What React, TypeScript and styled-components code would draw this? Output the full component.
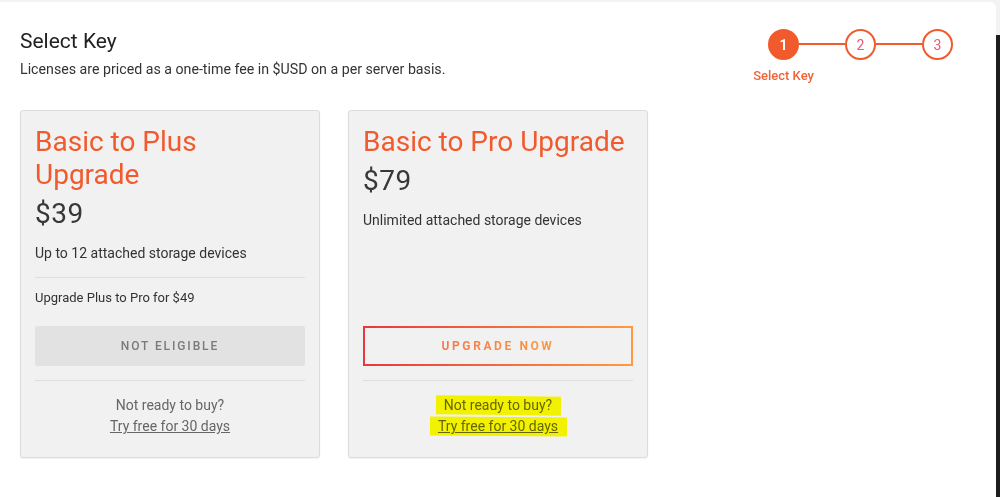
import React from 'react';
import styled, { createGlobalStyle, css } from 'styled-components';

const GlobalStyle = createGlobalStyle`
  html, body {
    margin: 0;
    padding: 0;
    background: #f3f3f3;
    font-family: Roboto, 'Liberation Sans', sans-serif;
    -webkit-font-smoothing: antialiased;
  }
`;

// Page frame
const Page = styled.div`
  display: flex;
  height: 497px;
  overflow: hidden;
`;

const Panel = styled.main`
  flex: 1;
  margin-top: 2px;
  background: #fff;
  border-top-right-radius: 6px;
  padding: 26px 43px 0 20px;
`;

const EdgeStrip = styled.div`
  width: 4px;
  display: flex;
  flex-direction: column;
  &::after {
    content: '';
    margin-top: 35px;
    flex: 1;
    background: #1d1d1d;
  }
`;

// Header
const Header = styled.header`
  display: flex;
  justify-content: space-between;
  align-items: flex-start;
`;

const Title = styled.h1`
  margin: 0;
  font-size: 21px;
  line-height: 26px;
  font-weight: 400;
  color: #222;
`;

const Lead = styled.p`
  margin: 5px 0 0;
  font-size: 14.2px;
  line-height: 20px;
  color: #333;
`;

// Stepper
const Stepper = styled.ol`
  display: flex;
  align-items: flex-start;
  list-style: none;
  margin: 1px 0 0;
  padding: 0;
`;

const Step = styled.li`
  display: flex;
  flex-direction: column;
  align-items: center;
  width: 31px;
`;

const Circle = styled.span<{ $active?: boolean }>`
  box-sizing: border-box;
  width: 31px;
  height: 31px;
  border-radius: 50%;
  display: flex;
  align-items: center;
  justify-content: center;
  font-size: 14px;
  border: 2px solid #f15a2c;
  ${({ $active }) =>
    $active
      ? css`
          background: #f15a2c;
          color: #fff;
          font-weight: 700;
        `
      : css`
          background: #fff;
          color: #f2557a;
        `}
`;

const StepLabel = styled.span`
  white-space: nowrap;
  margin-top: 8px;
  font-size: 13px;
  line-height: 15px;
  font-weight: 500;
  color: #f1643a;
`;

const Connector = styled.span`
  width: 46px;
  height: 2px;
  margin-top: 14px;
  background: #f15a2c;
`;

// Cards
const Cards = styled.section`
  display: flex;
  gap: 28px;
  margin-top: 27px;
`;

const Card = styled.article`
  box-sizing: border-box;
  width: 300px;
  display: flex;
  flex-direction: column;
  padding: 14px 14px 20px;
  background: #f1f1f1;
  border: 1px solid #dcdcdc;
  border-radius: 3px;
  box-shadow: 0 1px 2px rgba(0, 0, 0, 0.06);
`;

const CardTitle = styled.h2`
  margin: 0;
  font-size: 28px;
  line-height: 33px;
  font-weight: 400;
  color: #f15a2c;
`;

const Price = styled.div`
  margin-top: 6px;
  font-size: 28px;
  line-height: 33px;
  font-weight: 400;
  color: #383838;
  letter-spacing: 0.5px;
`;

const Desc = styled.p`
  margin: 13px 0 0;
  font-size: 14px;
  line-height: 20px;
  color: #333;
`;

const Divider = styled.hr<{ $gap: number }>`
  margin: ${({ $gap }) => $gap}px 0 0;
  border: 0;
  border-top: 1px solid #dedede;
`;

const Note = styled.p`
  margin: 11px 0 0;
  font-size: 13px;
  line-height: 18px;
  color: #333;
`;

const Footer = styled.div`
  margin-top: auto;
  padding-top: 19px;
  display: flex;
  flex-direction: column;
`;

const ActionButton = styled.button<{ $primary?: boolean }>`
  box-sizing: border-box;
  height: 40px;
  width: 100%;
  font-family: inherit;
  font-size: 12px;
  text-transform: uppercase;
  cursor: pointer;
  ${({ $primary }) =>
    $primary
      ? css`
          background: transparent;
          border: 2px solid;
          border-image: linear-gradient(90deg, #e8383f, #ff9a3e) 1;
          font-weight: 700;
          letter-spacing: 2.6px;
          & > span {
            background: linear-gradient(90deg, #f7774a, #fb9a3e);
            -webkit-background-clip: text;
            background-clip: text;
            color: transparent;
          }
        `
      : css`
          background: #e2e2e2;
          border: 0;
          border-radius: 2px;
          color: #7a7a7a;
          letter-spacing: 1.9px;
          font-weight: 500;
        `}
`;

const Trial = styled.div`
  margin-top: 14px;
  text-align: center;
  font-size: 14px;
  line-height: 21px;
  color: #666;
`;

const TrialLink = styled.a`
  color: #666;
  text-decoration: underline;
`;

const Marker = styled.span<{ $tilt: number }>`
  position: relative;
  &::before {
    content: '';
    position: absolute;
    left: -8px;
    right: -9px;
    top: -1px;
    bottom: -2px;
    background: #ffff00;
    mix-blend-mode: multiply;
    transform: rotate(${({ $tilt }) => $tilt}deg);
  }
`;

interface PlanProps {
  title: React.ReactNode;
  price: string;
  description: string;
  note?: string;
  eligible: boolean;
  highlight?: boolean;
}

const Plan: React.FC<PlanProps> = ({ title, price, description, note, eligible, highlight }) => {
  const line1 = 'Not ready to buy?';
  const line2 = <TrialLink href="#">Try free for 30 days</TrialLink>;
  return (
    <Card>
      <CardTitle>{title}</CardTitle>
      <Price>{price}</Price>
      <Desc>{description}</Desc>
      {note && (
        <>
          <Divider $gap={14} />
          <Note>{note}</Note>
        </>
      )}
      <Footer>
        <ActionButton $primary={eligible}>
          <span>{eligible ? 'Upgrade now' : 'Not eligible'}</span>
        </ActionButton>
        <Divider $gap={14} />
        <Trial>
          {highlight ? (
            <>
              <Marker $tilt={0.6}>{line1}</Marker>
              <br />
              <Marker $tilt={0.5}>{line2}</Marker>
            </>
          ) : (
            <>
              {line1}
              <br />
              {line2}
            </>
          )}
        </Trial>
      </Footer>
    </Card>
  );
};

const App: React.FC = () => (
  <>
    <GlobalStyle />
    <Page>
      <Panel>
        <Header>
          <div>
            <Title>Select Key</Title>
            <Lead>Licenses are priced as a one-time fee in $USD on a per server basis.</Lead>
          </div>
          <Stepper>
            <Step>
              <Circle $active>1</Circle>
              <StepLabel>Select Key</StepLabel>
            </Step>
            <Connector />
            <Step>
              <Circle>2</Circle>
            </Step>
            <Connector />
            <Step>
              <Circle>3</Circle>
            </Step>
          </Stepper>
        </Header>
        <Cards>
          <Plan
            title={<>Basic to Plus<br />Upgrade</>}
            price="$39"
            description="Up to 12 attached storage devices"
            note="Upgrade Plus to Pro for $49"
            eligible={false}
          />
          <Plan
            title="Basic to Pro Upgrade"
            price="$79"
            description="Unlimited attached storage devices"
            eligible
            highlight
          />
        </Cards>
      </Panel>
      <EdgeStrip />
    </Page>
  </>
);

export default App;
